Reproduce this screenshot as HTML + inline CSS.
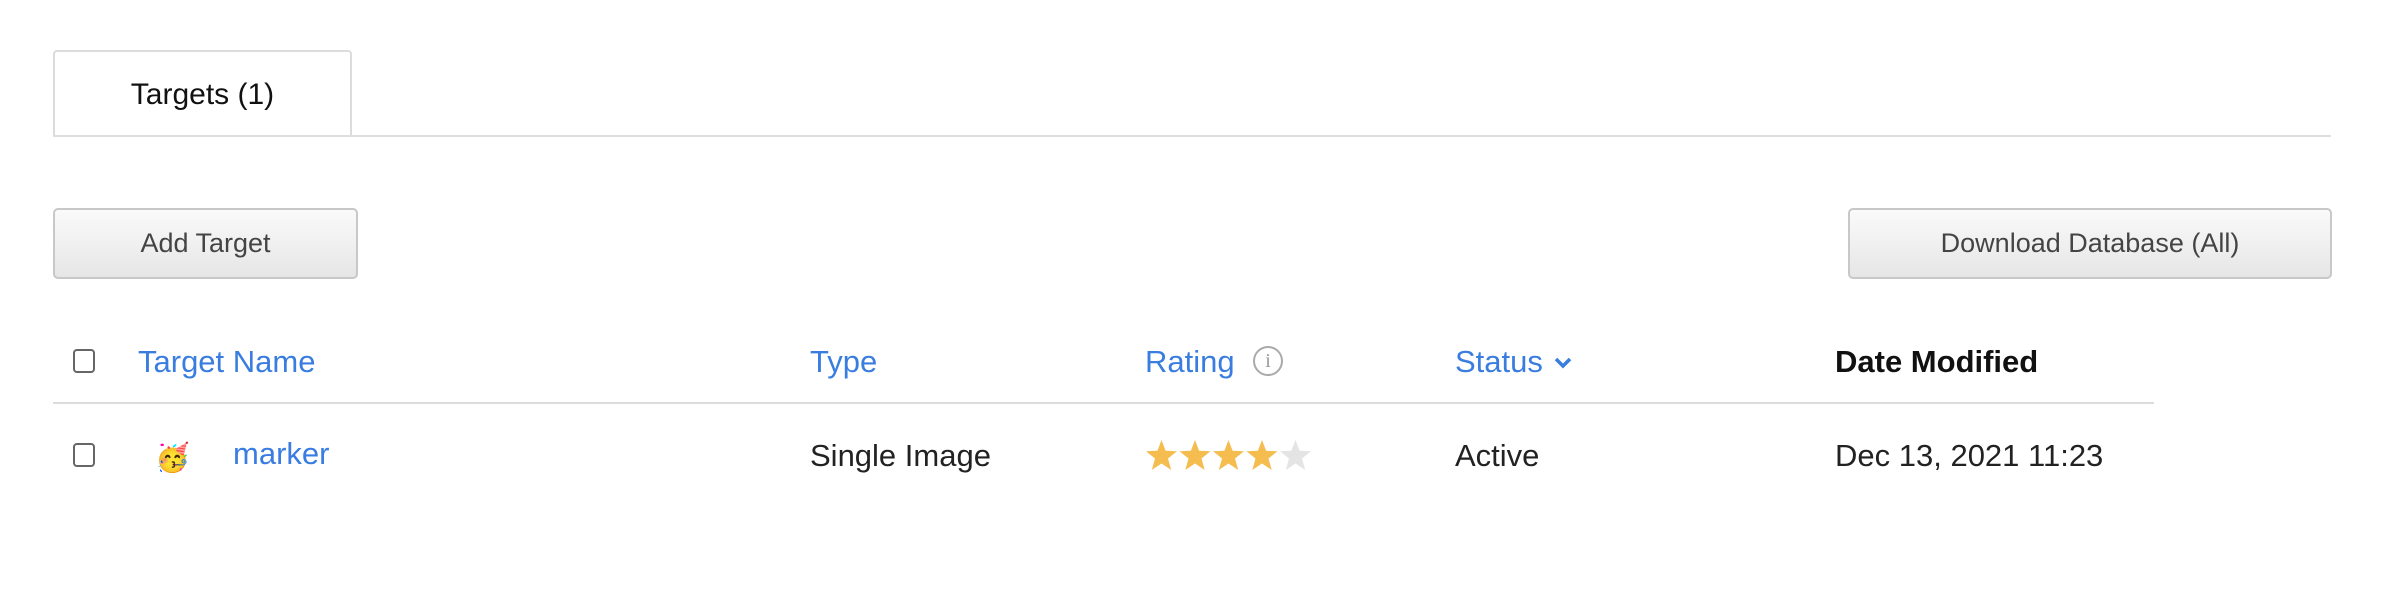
<!DOCTYPE html>
<html><head><meta charset="utf-8"><style>
body{margin:0;width:2384px;height:592px;background:#fff;font-family:"Liberation Sans",sans-serif;position:relative;overflow:hidden;color:#222}
.a{position:absolute;white-space:nowrap}
.blue{color:#3a7de0}
.btn{position:absolute;border:2px solid #c8c8c8;border-radius:5px;background:linear-gradient(#fafafa,#e6e6e6);box-sizing:border-box;font-size:27px;color:#444;display:flex;align-items:center;justify-content:center}
.cb{position:absolute;width:22px;height:24px;border:2.5px solid #666;border-radius:4px;box-sizing:border-box}
.t{font-size:31px;line-height:40px}
</style></head><body>
<div class="a" style="left:53px;top:50px;width:299px;height:87px;border:2px solid #dcdcdc;border-bottom:none;border-radius:4px 4px 0 0;box-sizing:border-box;background:#fff;font-size:30px;display:flex;align-items:center;justify-content:center;color:#111">Targets (1)</div>
<div class="a" style="left:53px;top:135px;width:2278px;height:2px;background:#dedede"></div>
<div class="btn" style="left:53px;top:208px;width:305px;height:71px">Add Target</div>
<div class="btn" style="left:1848px;top:208px;width:484px;height:71px">Download Database (All)</div>

<div class="cb" style="left:73px;top:349px"></div>
<div class="a t blue" style="left:138px;top:342px">Target Name</div>
<div class="a t blue" style="left:810px;top:342px">Type</div>
<div class="a t blue" style="left:1145px;top:342px">Rating</div>
<div class="a" style="left:1253px;top:346px;width:30px;height:30px;border:2px solid #aaa;border-radius:50%;box-sizing:border-box;color:#999;font-size:20px;text-align:center;line-height:27px;font-family:'Liberation Serif',serif">i</div>
<div class="a t blue" style="left:1455px;top:342px">Status</div>
<svg class="a" style="left:1554px;top:356px" width="18" height="14" viewBox="0 0 18 14"><path d="M2 3 L9 10 L16 3" stroke="#3a7de0" stroke-width="3.5" fill="none"/></svg>
<div class="a t" style="left:1835px;top:342px;font-weight:bold;color:#111">Date Modified</div>
<div class="a" style="left:53px;top:402px;width:2101px;height:2px;background:#dcdcdc"></div>

<div class="cb" style="left:73px;top:443px"></div>
<div class="a" style="left:155px;top:436px;font-size:28px;font-family:'Noto Sans CJK JP',sans-serif">🥳</div>
<div class="a t blue" style="left:233px;top:434px">marker</div>
<div class="a t" style="left:810px;top:436px">Single Image</div>
<svg class="a" style="left:1145px;top:439px" width="170" height="34" viewBox="0 0 170 34">
<defs><path id="s" d="M16.5 1 L20.6 11.8 L32 12.3 L23 19.5 L26.2 31 L16.5 24.5 L6.8 31 L10 19.5 L1 12.3 L12.4 11.8 Z"/></defs>
<use href="#s" x="0" fill="#f5bd4f"/><use href="#s" x="33.5" fill="#f5bd4f"/><use href="#s" x="67" fill="#f5bd4f"/><use href="#s" x="100.5" fill="#f5bd4f"/><use href="#s" x="134" fill="#e4e4e4"/>
</svg>
<div class="a t" style="left:1455px;top:436px">Active</div>
<div class="a t" style="left:1835px;top:436px">Dec 13, 2021 11:23</div>
</body></html>
